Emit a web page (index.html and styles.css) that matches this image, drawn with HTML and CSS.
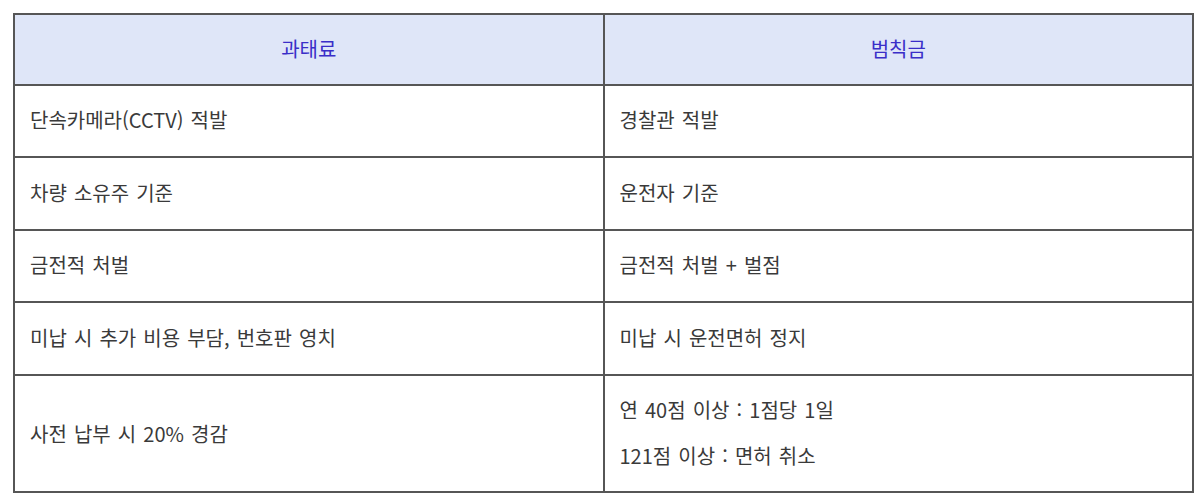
FILE: index.html
```html
<!DOCTYPE html>
<html lang="ko">
<head>
<meta charset="utf-8">
<link rel="stylesheet" href="styles.css">
</head>
<body>
<table class="cmp">
  <thead>
    <tr class="r-head"><th>과태료</th><th>범칙금</th></tr>
  </thead>
  <tbody>
    <tr class="r1"><td>단속카메라(CCTV) 적발</td><td>경찰관 적발</td></tr>
    <tr class="r2"><td>차량 소유주 기준</td><td>운전자 기준</td></tr>
    <tr class="r3"><td>금전적 처벌</td><td>금전적 처벌 + 벌점</td></tr>
    <tr class="r4"><td>미납 시 추가 비용 부담, 번호판 영치</td><td>미납 시 운전면허 정지</td></tr>
    <tr class="r5"><td>사전 납부 시 20% 경감</td><td><p>연 40점 이상 : 1점당 1일</p><p>121점 이상 : 면허 취소</p></td></tr>
  </tbody>
</table>
</body>
</html>
```

FILE: styles.css
```css
html, body {
  margin: 0;
  padding: 0;
  background: #ffffff;
}
body {
  padding: 13px 0 0 13px;
  font-family: "Noto Sans CJK KR", "Noto Sans", sans-serif;
  color: #3a3a3a;
}
.cmp {
  width: 1181px;
  border-collapse: collapse;
  table-layout: fixed;
  font-size: 20px;
  word-spacing: 1.5px;
}
.cmp th, .cmp td {
  border: 2px solid #565656;
  vertical-align: middle;
  padding: 0 15px 3px;
  text-align: left;
  font-weight: 400;
}
.cmp th {
  background: #dfe6f8;
  color: #3a2ec8;
  text-align: center;
}
.r-head { height: 71px; }
.r1 { height: 72px; }
.r2 { height: 73px; }
.r3 { height: 72px; }
.r4 { height: 73px; }
.r5 { height: 117px; }
.r5 td { padding-bottom: 1px; }
.cmp p {
  margin: 0;
  line-height: 30px;
}
.cmp p + p {
  margin-top: 16px;
}
```
